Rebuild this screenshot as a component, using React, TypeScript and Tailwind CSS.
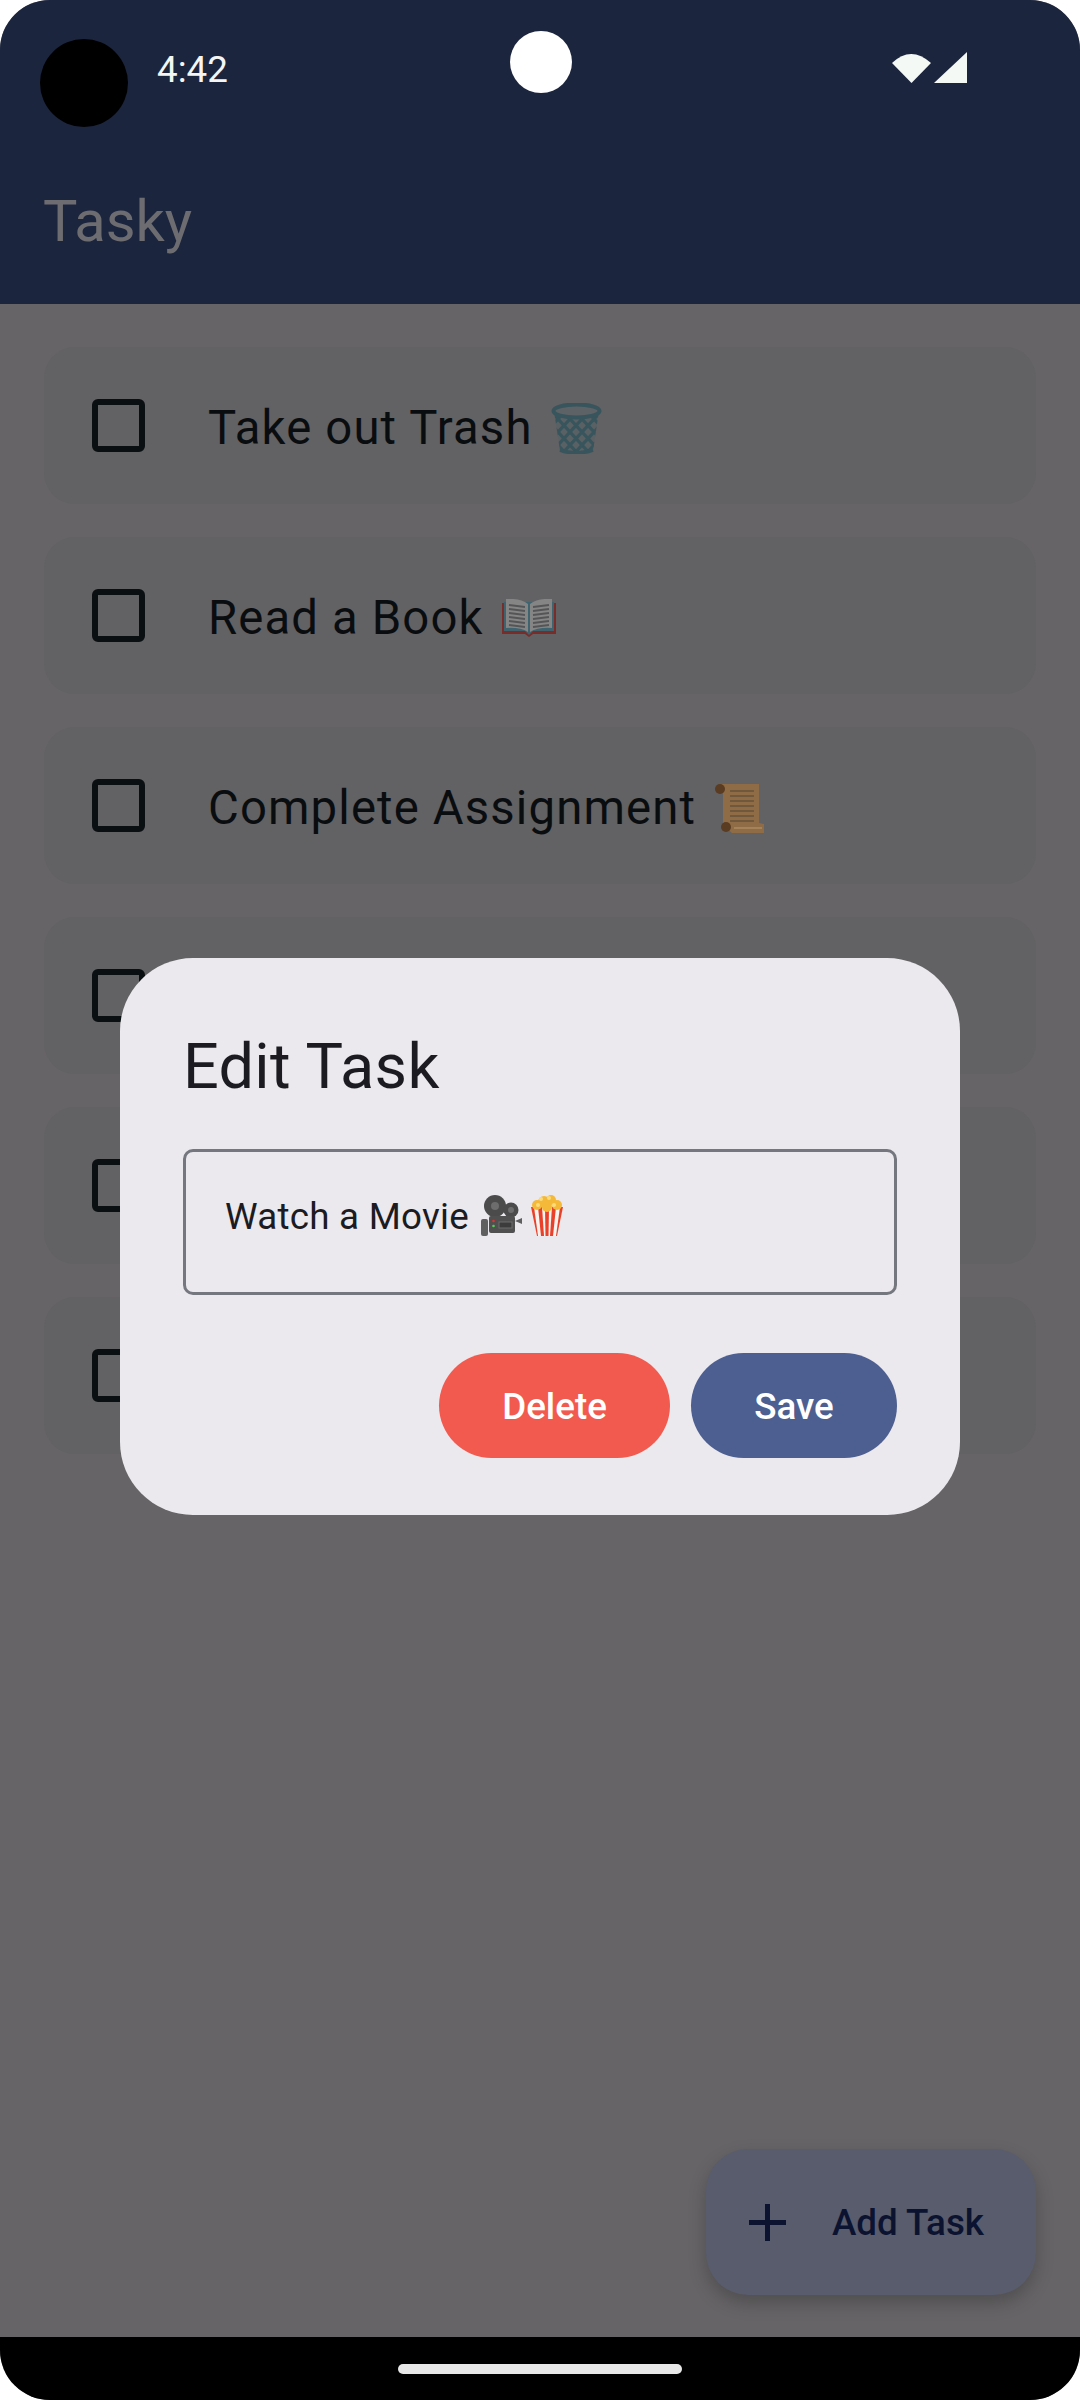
import React from 'react';

function TrashEmoji() {
  return (
    <svg width="51" height="51" viewBox="0 0 51 51" className="shrink-0">
      <defs>
        <clipPath id="basket">
          <path d="M3 8 L9 47 Q25 53 42 47 L48 8 Z" />
        </clipPath>
      </defs>
      <path d="M3 8 L9 47 Q25 53 42 47 L48 8 Z" fill="#5a6164" />
      <g clipPath="url(#basket)" stroke="#38555d" strokeWidth="3.2" fill="none">
        {[-40, -28, -16, -4, 8, 20, 32, 44].map((x) => (
          <path key={x} d={`M${x} 4 L${x + 46} 54 M${x + 46} 4 L${x} 54`} />
        ))}
      </g>
      <ellipse cx="25.5" cy="8" rx="23" ry="6.5" fill="#5c6265" stroke="#38555d" strokeWidth="4" />
      <path d="M9 47 Q25 53 42 47" fill="none" stroke="#38555d" strokeWidth="3.5" />
    </svg>
  );
}

function BookEmoji() {
  return (
    <svg width="54" height="38" viewBox="0 0 54 38" className="shrink-0">
      <path d="M0 4 L0 35 L23 35 L27 38 L31 35 L54 35 L54 4 Z" fill="#7a2c28" />
      <path d="M2 3 L2 32 L23 32 L27 36 L31 32 L52 32 L52 3 Z" fill="#3f6470" />
      <path d="M4 0 Q18 -1 26 5 L26 33 Q18 28 4 29 Z" fill="#858585" />
      <path d="M50 0 Q36 -1 28 5 L28 33 Q36 28 50 29 Z" fill="#858585" />
      <g stroke="#555557" strokeWidth="1.8">
        {[6, 10, 14, 18, 22, 26].map((y) => (
          <path key={y} d={`M7 ${y} L23 ${y + 2} M47 ${y} L31 ${y + 2}`} />
        ))}
      </g>
    </svg>
  );
}

function ScrollEmoji() {
  return (
    <svg width="50" height="50" viewBox="0 0 50 50" className="shrink-0">
      <path d="M6 1 L45 1 L45 40 L50 41 L50 50 L18 50 L9 42 L9 8 Z" fill="#8f6c45" />
      <circle cx="6" cy="6" r="5" fill="#5a3c22" />
      <circle cx="12" cy="44" r="5" fill="#5a3c22" />
      <g stroke="#70583c" strokeWidth="2">
        {[8, 13, 18, 23, 28, 33, 38].map((y) => (
          <path key={y} d={`M16 ${y} L40 ${y}`} />
        ))}
      </g>
      <path d="M20 45 L48 45" stroke="#a58258" strokeWidth="2" />
    </svg>
  );
}

function CameraEmoji() {
  return (
    <svg width="41" height="41" viewBox="0 0 41 41" className="shrink-0">
      <circle cx="14" cy="11" r="11" fill="#4b4b4b" />
      <circle cx="14" cy="11" r="4" fill="#6d6d6d" />
      <circle cx="30" cy="15" r="7.5" fill="#4b4b4b" />
      <circle cx="30" cy="15" r="3" fill="#6d6d6d" />
      <rect x="8" y="21" width="26" height="17" rx="2" fill="#505050" />
      <rect x="0" y="24" width="7" height="17" rx="2" fill="#5f5f5f" />
      <path d="M34 26 L41 23 L41 29 Z" fill="#5f5f5f" />
      <rect x="18" y="27" width="13" height="6" fill="#3c3c3c" stroke="#6d6d6d" />
      <circle cx="12.500" cy="26" r="1.300" fill="#d33" />
      <circle cx="12.500" cy="31" r="1.300" fill="#5c5" />
    </svg>
  );
}

function PopcornEmoji() {
  return (
    <svg width="36" height="41" viewBox="0 0 36 41" className="shrink-0">
      <path d="M2 12 L8 41 L28 41 L34 12 Z" fill="#f7f3ef" />
      <g fill="#e8402a">
        <path d="M2 12 L5 12 L9 41 L8 41 Z" />
        <path d="M9 12 L13 12 L15 41 L12 41 Z" />
        <path d="M16 12 L20 12 L19.500 41 L16.500 41 Z" />
        <path d="M23 12 L27 12 L24 41 L21 41 Z" />
        <path d="M31 12 L34 12 L28 41 L27 41 Z" />
      </g>
      <g fill="#f5b93a">
        <circle cx="8" cy="10" r="5" />
        <circle cx="15" cy="7" r="6" />
        <circle cx="22" cy="5" r="5" />
        <circle cx="28" cy="10" r="5" />
        <circle cx="18" cy="12" r="5" />
      </g>
      <g fill="#fbdc7a">
        <circle cx="12" cy="4" r="2" />
        <circle cx="20" cy="3" r="2" />
        <circle cx="9" cy="10" r="2" />
        <circle cx="25" cy="10" r="2" />
      </g>
    </svg>
  );
}

function Checkbox() {
  return <div className="w-[53px] h-[53px] shrink-0 rounded-[6px] border-[6px] border-[#0a0f12]" />;
}

function TaskCard({ label, emoji }: { label?: string; emoji?: React.ReactNode }) {
  return (
    <div className="h-[157px] shrink-0 rounded-[31px] bg-[#626163] flex items-center pl-[48px] gap-[63px]">
      <Checkbox />
      {label && (
        <div className="flex items-center gap-[18px] pt-[5px] text-[47.25px] tracking-[1.15px] text-[#0a0d10]">
          <span>{label}</span>
          {emoji}
        </div>
      )}
    </div>
  );
}

export default function App() {
  return (
    <div className="relative w-[1080px] h-[2400px] bg-white font-['Roboto',sans-serif]">
      <div className="h-full rounded-[50px] overflow-hidden flex flex-col bg-[#666466]">
        {/* Status bar + app bar */}
        <header className="h-[304px] shrink-0 bg-[#1c253e] px-[40px] pt-[39px]">
          <div className="relative flex items-center h-[88px]">
            <div className="w-[88px] h-[88px] rounded-full bg-black" />
            <span className="ml-[29px] -mt-[27px] text-[36.75px] text-[#f4f6f4]">4:42</span>
            <div className="absolute left-[470px] -top-[8px] w-[62px] h-[62px] rounded-full bg-white" />
            <svg width="76" height="33" viewBox="0 0 76 33" className="absolute left-[852px] top-[12px]">
              <path d="M0 12 Q19 -6 39 12 L19.500 32 Z" fill="#f4f9f5" />
              <path d="M42 32 L75 1 L75 32 Z" fill="#f4f9f5" />
            </svg>
          </div>
          <h1 className="ml-[3px] mt-[60px] text-[57.75px] leading-[68px] text-[#6d6c70]">Tasky</h1>
        </header>

        {/* Task list */}
        <main className="flex-1 flex flex-col px-[44px] pt-[43px] gap-[33px]">
          <TaskCard label="Take out Trash" emoji={<TrashEmoji />} />
          <TaskCard label="Read a Book" emoji={<BookEmoji />} />
          <TaskCard label="Complete Assignment" emoji={<ScrollEmoji />} />
          <TaskCard />
          <TaskCard />
          <TaskCard />
          <button className="mt-auto mb-[42px] self-end w-[330px] h-[146px] rounded-[42px] bg-[#585c6c] shadow-[0_8px_18px_rgba(0,0,0,0.22)] flex items-center pl-[43px] text-[#0b1330]">
            <svg width="37" height="37" viewBox="0 0 37 37">
              <path d="M18.500 0 V37 M0 18.500 H37" stroke="#0b1330" strokeWidth="5" />
            </svg>
            <span className="ml-[46px] pt-[2px] text-[36.75px] font-medium">Add Task</span>
          </button>
        </main>

        {/* Navigation bar */}
        <nav className="h-[63px] shrink-0 bg-black flex items-center justify-center">
          <div className="w-[284px] h-[10px] rounded-full bg-[#e8e8e8]" />
        </nav>
      </div>

      {/* Edit dialog */}
      <div className="absolute left-[120px] top-[958px] w-[840px] h-[557px] rounded-[73px] bg-[#ebe9ee] px-[63px] pt-[67px] flex flex-col">
        <h2 className="text-[63px] leading-[84px] tracking-[0.3px] text-[#1b1b21]">Edit Task</h2>
        <div className="mt-[40px] h-[146px] rounded-[10px] border-[3px] border-[#75777f] pl-[39px] pt-[38px] flex items-start">
          <span className="text-[36.75px] leading-[54px] tracking-[0.25px] text-[#1b1b21]">Watch a Movie</span>
          <span className="ml-[12px] mt-[5px] flex gap-[7px]">
            <CameraEmoji />
            <PopcornEmoji />
          </span>
        </div>
        <div className="mt-[58px] flex justify-end gap-[21px]">
          <button className="w-[231px] h-[105px] pt-[2px] rounded-full bg-[#f35a4f] text-white text-[36.75px] font-medium">Delete</button>
          <button className="w-[206px] h-[105px] pt-[2px] rounded-full bg-[#4d5f91] text-white text-[36.75px] font-medium">Save</button>
        </div>
      </div>
    </div>
  );
}
